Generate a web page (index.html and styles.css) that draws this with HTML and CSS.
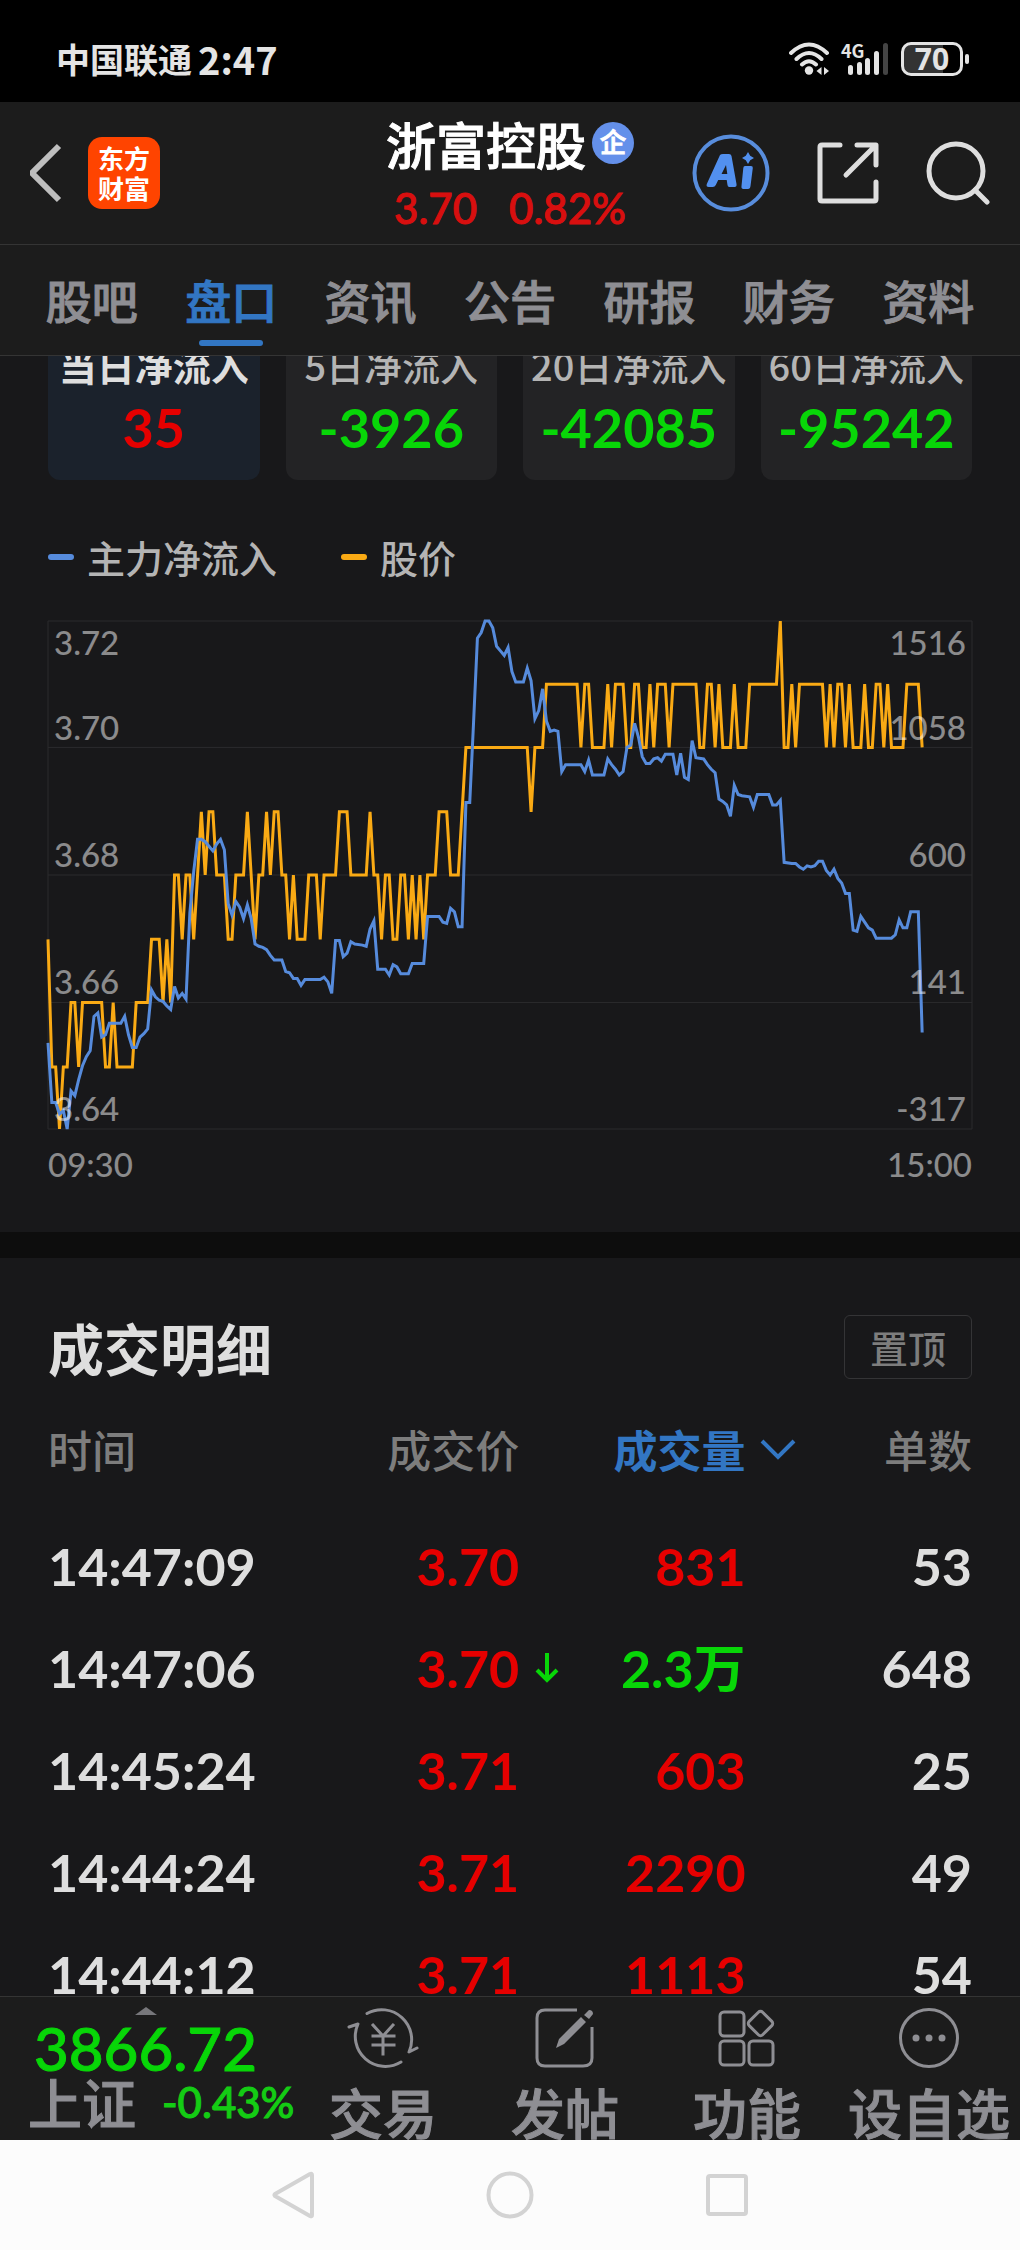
FILE: index.html
```html
<!DOCTYPE html>
<html lang="zh-CN">
<head>
<meta charset="utf-8">
<meta name="viewport" content="width=device-width, initial-scale=1">
<title>浙富控股</title>
<link rel="stylesheet" href="styles.css">
</head>
<body>
<div class="app">
  <div class="status">
    <div class="status-left"><span class="carrier">中国联通</span><span class="clock">2:47</span></div>
    <div class="status-right">
      <svg width="40" height="34" viewBox="0 0 40 34" fill="none" stroke="#e4e4e4" stroke-width="4" stroke-linecap="round">
        <path d="M2 11Q20-6 38 11M7.500 17Q20 5 32.500 17M13 22.500Q20 16 27 22.500" />
        <circle cx="20" cy="28.500" r="4.200" fill="#e4e4e4" stroke="none"/>
        <path d="M27.500 29l5-4v8zM40 29l-5-4v8z" fill="#e4e4e4" stroke="none"/>
      </svg>
      <div class="signal">
        <span class="net">4G</span>
        <svg width="48" height="34" viewBox="0 0 48 34" fill="#e4e4e4">
          <rect x="7" y="23" width="5" height="10" rx="2.500"/><rect x="16" y="20" width="5" height="13" rx="2.500"/><rect x="24" y="16" width="5" height="17" rx="2.500"/><rect x="33" y="9" width="5" height="24" rx="2.500"/><rect x="42" y="1" width="5" height="32" rx="2.500" fill="#444"/>
        </svg>
      </div>
      <div class="battery"><span>70</span></div>
    </div>
  </div>

  <header class="header">
    <div class="header-side">
      <button class="icon-btn" aria-label="返回"><svg width="34" height="60" viewBox="3 0 34 60" fill="none" stroke="#bebebe" stroke-width="6"><path d="M32 3L5 30l27 27"/></svg></button>
      <a class="logo" href="#"><span>东方</span><span>财富</span></a>
    </div>
    <div class="header-title">
      <h1>浙富控股<span class="badge">企</span></h1>
      <p class="quote"><span>3.70</span><span>0.82%</span></p>
    </div>
    <div class="header-side header-actions">
      <button class="icon-btn" aria-label="AI 助手"><svg width="78" height="78" viewBox="0 0 78 78"><circle cx="39" cy="39" r="36.500" fill="none" stroke="#588ddc" stroke-width="4"/><path fill="#5290ef" fill-rule="evenodd" d="M28 21q1-1 3-1h6q2 0 2.500 2l5 28q.5 3-2 3h-5q-2 0-2-2l-.8-5h-8.500l-2.400 5q-1 2-3 2h-4q-3 0-2-3zM34 31l-4.500 9h5.800zM53 32h6q2 0 1.800 2l-2.300 18q-.3 3-2.500 3h-4.500q-2.500 0-2-3l1.800-18q.2-2 1.700-2zM56 18l2.200 3.800L62 24l-3.800 2.200L56 30l-2.200-3.800L50 24l3.800-2.200z"/></svg></button>
      <button class="icon-btn" aria-label="分享"><svg width="62" height="62" viewBox="0 0 62 62" fill="none" stroke="#dedede" stroke-width="5" stroke-linecap="round" stroke-linejoin="round"><path d="M23 3H5q-2 0-2 2v52q0 2 2 2h52q2 0 2-2V40M40 3h19v20M58 4L29 33"/></svg></button>
      <button class="icon-btn" aria-label="搜索"><svg width="64" height="64" viewBox="0 0 64 64" fill="none" stroke="#dedede" stroke-width="5" stroke-linecap="round"><circle cx="30" cy="30" r="27"/><path d="M49 49l12 12"/></svg></button>
    </div>
  </header>

  <nav class="tabs">
    <a href="#">股吧</a><a href="#" class="active">盘口</a><a href="#">资讯</a><a href="#">公告</a><a href="#">研报</a><a href="#">财务</a><a href="#">资料</a>
  </nav>

  <main class="content">
    <section class="flow">
      <div class="cards">
        <button class="card selected"><span class="card-label">当日净流入</span><span class="card-value up">35</span></button>
        <button class="card"><span class="card-label">5日净流入</span><span class="card-value down">-3926</span></button>
        <button class="card"><span class="card-label">20日净流入</span><span class="card-value down">-42085</span></button>
        <button class="card"><span class="card-label">60日净流入</span><span class="card-value down">-95242</span></button>
      </div>
      <div class="legend"><span class="key key-flow">主力净流入</span><span class="key key-price">股价</span></div>
      <div class="chart">
        <!-- x: minute of the session, y: distance below the top grid line -->
        <svg class="plot" viewBox="0 0 241 442" preserveAspectRatio="none">
          <path class="grid" d="M0 0H241V442H0ZM0 110H241M0 221H241M0 332H241"/>
          <polyline class="line line-price" points="0,277 1,388 2,388 3,442 4,388 5,388 6,332 7,332 8,388 9,332 14,332 15,388 16,388 17,332 18,388 22,388 23,332 26,332 27,277 29,277 30,332 31,277 32,332 33,221 34,221 35,277 36,221 37,221 38,277 40,166 41,221 42,166 43,166 44,221 46,221 47,277 48,277 49,221 51,221 52,166 54,277 55,221 56,221 57,166 58,221 59,166 60,166 61,221 62,221 63,277 64,221 65,277 67,277 68,221 70,221 71,277 72,221 75,221 76,166 78,166 79,221 83,221 84,166 85,221 86,221 87,277 88,221 89,221 90,277 91,277 92,221 93,221 94,277 95,221 96,277 97,221 98,277 99,221 101,221 102,166 104,166 105,221 107,221 109,110 125,110 126,166 127,110 129,110 130,55 138,55 139,110 140,55 141,55 142,110 145,110 146,55 147,110 148,55 150,55 151,110 152,110 153,55 154,55 155,110 156,110 157,55 158,110 159,55 161,55 162,110 163,55 169,55 170,110 171,110 172,55 173,55 174,110 175,55 176,110 178,110 179,55 180,110 182,110 183,55 190,55 191,0 192,110 193,110 194,55 195,110 196,55 202,55 203,110 204,55 205,110 206,55 207,55 208,110 209,55 210,110 212,110 213,55 214,110 215,110 216,55 217,55 218,110 219,55 220,110 223,110 224,55 227,55 228,110"/>
          <polyline class="line line-flow" points="0,367 1,419 2,419 3,429 4,426 5,442 6,409 7,413 8,399 9,387 10,379 11,374 12,344 13,341 14,362 15,360 16,350 19,350 20,344 21,360 22,371 23,371 24,362 25,359 26,355 27,321 28,327 29,330 30,331 31,335 32,338 33,318 34,328 35,324 36,329 37,254 38,218 39,190 40,190 41,192 42,196 43,200 44,194 45,190 46,199 47,246 48,256 49,244 50,249 51,259 52,247 53,259 54,281 55,283 56,284 57,286 58,291 59,295 61,295 62,305 63,306 64,311 65,311 66,317 67,312 71,312 72,310 73,314 74,324 75,278 76,278 77,292 78,289 79,279 80,281 82,282 83,283 84,268 85,261 86,303 88,303 89,308 90,299 91,301 92,307 94,307 95,298 98,298 99,257 102,257 103,262 104,263 105,250 106,253 107,266 108,266 109,158 110,158 111,88 112,15 113,10 114,0 115,0 116,6 117,22 118,26 119,30 120,23 121,44 122,53 124,53 125,41 126,52 127,85 128,78 129,59 130,87 131,96 132,95 133,96 134,131 135,125 139,125 140,131 141,121 142,134 145,134 146,120 147,125 148,129 149,134 150,131 151,110 152,108 153,89 154,101 155,118 156,124 157,124 158,120 159,119 160,122 161,116 163,116 164,134 165,115 166,136 167,138 168,104 169,119 171,120 172,125 173,129 174,132 175,155 176,157 177,160 178,170 179,143 180,151 181,152 183,153 184,162 185,151 188,151 189,160 190,160 191,156 192,210 194,211 195,211 196,214 197,216 198,213 199,214 200,213 201,209 202,209 203,217 204,221 205,216 206,224 207,228 208,237 209,237 210,269 211,270 212,257 213,262 214,267 215,269 216,276 220,276 221,273 222,260 223,267 224,267 225,253 227,253 228,358"/>
        </svg>
        <div class="scale">
          <div><span>3.72</span><span>3.70</span></div><div><span>3.68</span></div><div><span>3.66</span></div><div><span>3.64</span></div>
        </div>
        <div class="scale scale-right">
          <div><span>1516</span><span>1058</span></div><div><span>600</span></div><div><span>141</span></div><div><span>-317</span></div>
        </div>
      </div>
      <div class="times"><span>09:30</span><span>15:00</span></div>
    </section>

    <section class="trades">
      <div class="trades-head"><h2>成交明细</h2><button class="pin">置顶</button></div>
      <table>
        <colgroup><col class="c-time"><col class="c-price"><col class="c-volume"><col class="c-count"></colgroup>
        <thead>
          <tr><th>时间</th><th>成交价</th><th class="sorted">成交量<svg class="after sort" width="36" height="22" viewBox="0 0 36 22" fill="none" stroke="#3276c3" stroke-width="4"><path d="M2 2l16 16L34 2"/></svg></th><th>单数</th></tr>
        </thead>
        <tbody>
          <tr><td>14:47:09</td><td class="up">3.70</td><td class="up">831</td><td>53</td></tr>
          <tr><td>14:47:06</td><td class="up">3.70<svg class="after drop" width="24" height="30" viewBox="0 0 24 30" fill="none" stroke="#08d608" stroke-width="4"><path d="M12 0v27M2 17l10 10 10-10"/></svg></td><td class="down">2.3万</td><td>648</td></tr>
          <tr><td>14:45:24</td><td class="up">3.71</td><td class="up">603</td><td>25</td></tr>
          <tr><td>14:44:24</td><td class="up">3.71</td><td class="up">2290</td><td>49</td></tr>
          <tr><td>14:44:12</td><td class="up">3.71</td><td class="up">1113</td><td>54</td></tr>
        </tbody>
      </table>
    </section>
  </main>

  <footer class="toolbar">
    <a class="index" href="#">
      <svg class="caret" width="22" height="8" viewBox="0 0 22 8"><path d="M11 0l11 8H0z" fill="#77777b"/></svg>
      <span class="index-value">3866.72</span>
      <span class="index-line"><span class="index-name">上证</span><span class="index-change">-0.43%</span></span>
    </a>
    <button class="tool">
      <svg width="72" height="62" viewBox="0 0 72 62" fill="none" stroke="#8e8e93" stroke-width="3" stroke-linecap="round" stroke-linejoin="round"><path d="M20 6.500A30 30 0 0 1 62 45L70 41M54 55A30 30 0 0 1 11 17L2 20"/><path d="M26 18l10 11 10-11M36 29v18M26 29h21M26 38h21" stroke-linecap="square"/></svg>
      <span>交易</span>
    </button>
    <button class="tool">
      <svg width="60" height="62" viewBox="0 0 60 62" fill="none" stroke="#8e8e93" stroke-width="3"><path d="M42 3H10Q2 3 2 11v40q0 8 8 8h38q9 0 9-8V20"/><path d="M21 41l3-9 22-22 5 5-22 22zM49 8l5-5q4 0 4 4l-4 5z" fill="#8e8e93" stroke="none"/></svg>
      <span>发帖</span>
    </button>
    <button class="tool">
      <svg width="60" height="62" viewBox="0 0 60 62" fill="none" stroke="#8e8e93" stroke-width="3"><rect x="3" y="5" width="24" height="24" rx="4"/><rect x="3" y="34" width="24" height="24" rx="4"/><rect x="32" y="34" width="24" height="24" rx="4"/><rect x="34" y="7" width="19" height="19" rx="3" transform="rotate(45 43.500 16.500)"/></svg>
      <span>功能</span>
    </button>
    <button class="tool">
      <svg width="62" height="62" viewBox="0 0 62 62"><circle cx="31" cy="31" r="28.500" fill="none" stroke="#8e8e93" stroke-width="3"/><g fill="#8e8e93"><circle cx="18" cy="31" r="3.500"/><circle cx="31" cy="31" r="3.500"/><circle cx="44" cy="31" r="3.500"/></g></svg>
      <span>设自选</span>
    </button>
  </footer>

  <nav class="system">
    <button class="icon-btn" aria-label="返回"><svg width="48" height="48" viewBox="0 0 48 48" fill="none" stroke="#d3d3d3" stroke-width="4" stroke-linejoin="round"><path d="M41 3q2-1 2 1v40q0 2-2 1L6 25q-1-1 0-2z"/></svg></button>
    <button class="icon-btn" aria-label="主屏幕"><svg width="48" height="48" viewBox="0 0 48 48" fill="none" stroke="#d3d3d3" stroke-width="4"><circle cx="24" cy="24" r="21.500"/></svg></button>
    <button class="icon-btn" aria-label="最近任务"><svg width="48" height="48" viewBox="0 0 48 48" fill="none" stroke="#d3d3d3" stroke-width="4"><rect x="5" y="5" width="38" height="38" rx="2"/></svg></button>
  </nav>
</div>
</body>
</html>
```
FILE: styles.css
```css
* { box-sizing: border-box; }

body {
  margin: 0;
  background: #18181a;
  color: #dedede;
  font-family: "Noto Sans CJK SC", sans-serif;
  font-weight: 500;
}

h1, h2, p { margin: 0; }
a { color: inherit; text-decoration: none; }
svg { display: block; }

button {
  margin: 0;
  padding: 0;
  border: 0;
  background: none;
  color: inherit;
  font: inherit;
}

.up { color: #e60000; }
.down { color: #08d608; }

/* Figures */
.quote, .card-value, .scale, .times, td, .index-value, .index-change {
  font-family: Lato, "Noto Sans CJK SC", sans-serif;
}

/* Medium weight for large labels and figures */
h1, .tabs, .tool, .index-name, .quote, .index-value, .index-change {
  -webkit-text-stroke: 1px currentColor;
}

.app {
  display: flex;
  flex-direction: column;
  height: 100vh;
}

/* Status bar */
.status {
  flex: none;
  display: flex;
  justify-content: space-between;
  align-items: center;
  height: 102px;
  padding: 16px 50px 0 56px;
  background: #000;
  color: #e4e4e4;
  font-weight: 700;
}
.status-left { display: flex; align-items: center; gap: 6px; line-height: 48px; }
.carrier { font-size: 34px; }
.clock { font-size: 38px; }
.status-right { display: flex; align-items: center; gap: 12px; }
.signal { position: relative; }
.net {
  position: absolute;
  top: 0;
  left: 0;
  font-size: 18px;
  line-height: 16px;
}
.battery {
  position: relative;
  width: 62px;
  height: 34px;
  margin-right: 7px;
  border: 3px solid #e4e4e4;
  border-radius: 10px;
  background: linear-gradient(90deg, #333 70%, #000 70%);
  font-family: "Open Sans", sans-serif;
  font-size: 30px;
  line-height: 28px;
  text-align: center;
}
.battery::after {
  content: "";
  position: absolute;
  top: 9px;
  right: -9px;
  width: 4px;
  height: 10px;
  border-radius: 2px;
  background: #e4e4e4;
}

/* Title bar */
.header {
  flex: none;
  display: grid;
  grid-template-columns: 1fr auto 1fr;
  align-items: center;
  height: 143px;
  padding: 0 30px;
  border-bottom: 1px solid #343434;
  background: #1c1c1c;
}
.header-side { display: flex; align-items: center; gap: 24px; }
.header-actions { justify-content: flex-end; gap: 47px; }
.logo {
  display: flex;
  flex-direction: column;
  justify-content: center;
  width: 72px;
  height: 72px;
  border-radius: 14px;
  background: #ff4400;
  color: #fff;
  font-size: 26px;
  font-weight: 700;
  line-height: 30px;
  text-align: center;
}
.header-title { padding-top: 4px; text-align: center; }
h1 {
  display: flex;
  align-items: center;
  gap: 6px;
  color: #fff;
  font-size: 50px;
  font-weight: 500;
  line-height: 62px;
}
.badge {
  width: 42px;
  height: 42px;
  border-radius: 50%;
  background: #6490ea;
  font-size: 26px;
  line-height: 38px;
}
.quote {
  display: flex;
  justify-content: center;
  gap: 32px;
  padding-top: 4px;
  color: #d80f0f;
  font-size: 42px;
  line-height: 60px;
}

/* Section tabs */
.tabs {
  flex: none;
  display: flex;
  height: 111px;
  padding: 0 22px;
  border-bottom: 1px solid #343434;
  background: #1c1c1c;
  color: #8e8e93;
  font-size: 46px;
  line-height: 108px;
}
.tabs a { flex: 1; text-align: center; }
.tabs .active {
  display: flex;
  flex-direction: column;
  align-items: center;
  color: #3276c3;
}
.tabs .active::after {
  content: "";
  width: 64px;
  height: 6px;
  margin-top: -13px;
  border-radius: 3px;
  background: #3276c3;
}

/* Scrolled page */
.content {
  flex: 1;
  min-height: 0;
  overflow: hidden;
}
.flow {
  margin-top: -36px;
  padding: 0 48px 47px;
  border-bottom: 26px solid #0d0d0d;
}
.cards { display: grid; grid-template-columns: repeat(4, 1fr); gap: 26px; }
.card {
  display: flex;
  flex-direction: column;
  align-items: center;
  gap: 6px;
  padding: 20px 0;
  border-radius: 12px;
  background: #232325;
  white-space: nowrap;
}
.card-label { color: #b4b4b4; font-size: 38px; line-height: 50px; }
.card-value { font-size: 54px; font-weight: 700; line-height: 64px; }
.selected { background: #1b222c; }
.selected .card-label { color: #dedede; font-weight: 700; }

.legend {
  display: flex;
  gap: 64px;
  margin-top: 55px;
  color: #b4b4b4;
  font-size: 38px;
  line-height: 44px;
}
.key { display: flex; align-items: center; gap: 13px; }
.key::before {
  content: "";
  width: 26px;
  height: 6px;
  border-radius: 3px;
  background: currentColor;
}
.key-flow::before { background: #568bdc; }
.key-price::before { background: #faaa14; }

.chart { position: relative; margin-top: 42px; }
.plot { width: 100%; height: 508px; overflow: visible; }
.grid { fill: none; stroke: #2b2b2d; stroke-width: 1px; vector-effect: non-scaling-stroke; }
.line { fill: none; stroke-width: 3px; vector-effect: non-scaling-stroke; }
.line-price { stroke: #faaa14; }
.line-flow { stroke: #568bdc; }
.scale, .times {
  color: rgba(255, 255, 255, 0.5);
  font-size: 33px;
  line-height: 42px;
}
.scale {
  position: absolute;
  inset: 0;
  display: grid;
  grid-template-rows: repeat(4, 1fr);
  padding: 0 6px;
}
.scale div { display: flex; flex-direction: column; justify-content: flex-end; }
.scale div:first-child { justify-content: space-between; }
.scale-right { text-align: right; }
.times { display: flex; justify-content: space-between; margin-top: 14px; }

/* Trades */
.trades { padding: 57px 48px 0; }
.trades-head { display: flex; justify-content: space-between; align-items: center; }
h2 { font-size: 56px; font-weight: 700; line-height: 64px; }
.pin {
  width: 128px;
  height: 64px;
  border: 1px solid #343436;
  border-radius: 6px;
  color: #7d7d7d;
  font-size: 38px;
  line-height: 58px;
}
table {
  width: 100%;
  margin-top: 30px;
  border-collapse: collapse;
  table-layout: fixed;
}
.c-time { width: 26%; }
.c-price { width: 25%; }
.c-volume, .c-count { width: auto; }
th {
  height: 106px;
  padding: 0;
  color: #7d7d7d;
  font-size: 44px;
  font-weight: 500;
  line-height: 80px;
  text-align: right;
  vertical-align: top;
}
td {
  height: 102px;
  padding: 0;
  font-size: 52px;
  font-weight: 700;
  line-height: 102px;
  text-align: right;
  vertical-align: top;
}
th:first-child, td:first-child { text-align: left; }
.sorted { color: #3276c3; font-weight: 700; }
th, td { position: relative; }
.after { position: absolute; left: 100%; }
.sort { top: 30px; margin-left: 14px; }
.drop { top: 36px; margin-left: 16px; }

/* Bottom toolbar */
.toolbar {
  flex: none;
  display: grid;
  grid-template-columns: minmax(0, 2fr) repeat(4, minmax(182px, 1fr));
  height: 144px;
  overflow: hidden;
  border-top: 1px solid #343434;
  background: #1c1c1c;
  color: #8e8e93;
}
.index { display: flex; flex-direction: column; padding: 10px 0 0 28px; white-space: nowrap; }
.caret { margin-left: 107px; }
.index-value {
  padding-left: 6px;
  color: #08d608;
  font-size: 60px;
  line-height: 66px;
}
.index-line { display: flex; align-items: center; gap: 26px; line-height: 42px; }
.index-name { font-size: 54px; }
.index-change { color: #14cc14; font-size: 42px; }
.tool {
  display: flex;
  flex-direction: column;
  align-items: center;
  padding-top: 10px;
  font-size: 54px;
  line-height: 86px;
  white-space: nowrap;
}
.tool svg { flex: none; }

/* System navigation */
.system {
  flex: none;
  display: flex;
  justify-content: center;
  align-items: center;
  gap: 169px;
  height: 110px;
  background: #fcfcfc;
}
```
